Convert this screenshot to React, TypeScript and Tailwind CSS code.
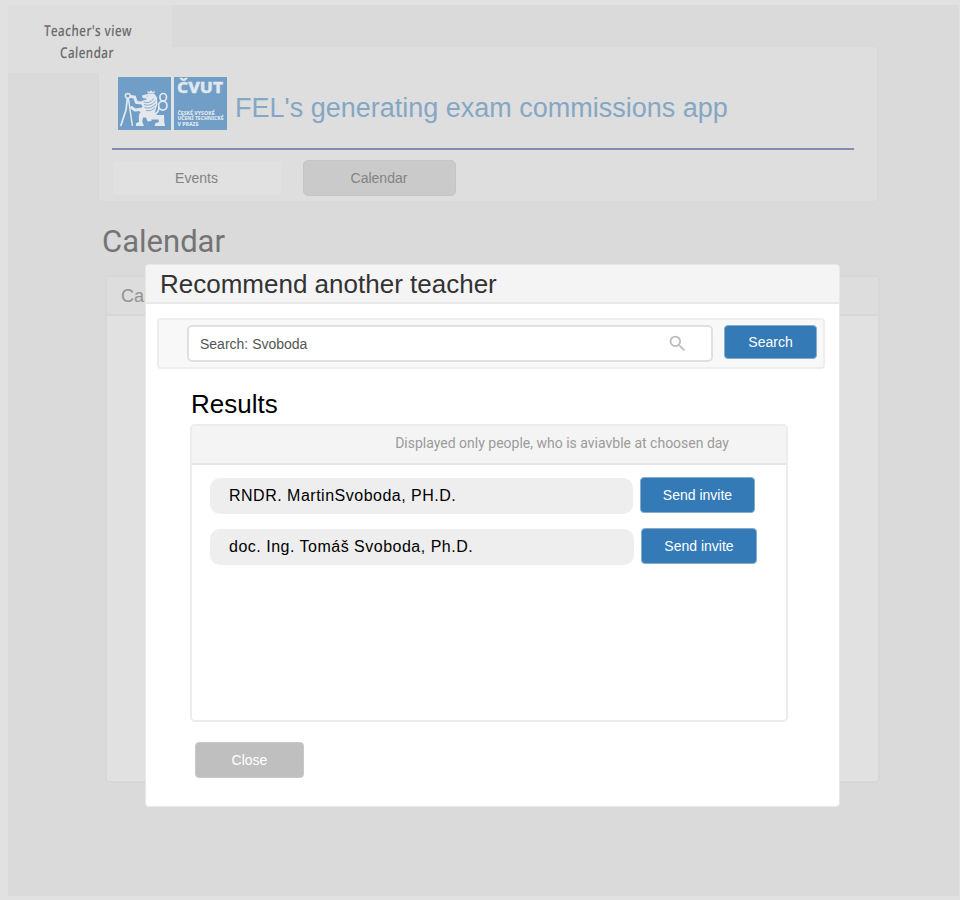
import type { ReactNode } from "react";

const arial = "font-['Liberation_Sans',Arial,sans-serif]";

function UniversityLogo() {
  return (
    <svg className="block h-[53px] w-[109px] shrink-0" viewBox="0 0 109 53">
      <rect width="53" height="53" fill="#719ec6" />
      <rect x="53" width="3" height="53" fill="#dde2e6" />
      <rect x="56" width="53" height="53" fill="#719ec6" />
      <g fill="none" stroke="#e2e8ed" strokeLinecap="round" strokeLinejoin="round">
        {/* compass */}
        <circle cx="9.8" cy="18.8" r="2.4" strokeWidth="1.5" />
        <path d="M9.3 22 L8 33 L3 48.3" strokeWidth="1.8" />
        <path d="M10.5 22 L12.5 36 L14.3 48.3" strokeWidth="1.5" />
        {/* forelegs */}
        <path d="M13 19.5 L16.5 20 L18.5 25.5 L25 26" strokeWidth="3" />
        <path d="M13.5 30.5 L17 33 L26 32" strokeWidth="3" />
        {/* tail */}
        <ellipse cx="45.2" cy="20.2" rx="3.3" ry="3.7" strokeWidth="1.7" />
        <ellipse cx="44.8" cy="28.6" rx="4.2" ry="4.5" strokeWidth="1.7" />
        <path d="M40.8 30 Q41 35 37 37" strokeWidth="1.6" />
      </g>
      <g fill="#e2e8ed">
        {/* crown */}
        <path d="M29.3 13.8 L31.2 15 L33 13.2 L34.7 15 L37 13.8 L36.2 16.5 L30 16.5 Z" />
        {/* head and body */}
        <path d="M24 18.5 L29.5 17 L36.5 17 L39 20.5 L39.4 27 L37.5 33 L37 37 L26 38 L21 34 L24.5 29.5 L22.5 25.5 L25 23.3 L29 22.5 L28 21.5 L24.5 21 Z" />
        {/* hind legs */}
        <path d="M22 35.5 L33 35 L33.5 44 L29.5 44.5 L28 40.5 L25 40.5 L24.3 45 L26 49 L17.8 49 L18.3 46 L21 45 L20.8 39 Z" />
        <path d="M28 36 L37 35.5 L39 38 H46 L46.3 45 L47 49 H36.5 L37.5 46 L41 45 L40.5 42.5 L33 42.5 Z" />
      </g>
      <path d="M25.5 24.8 Q31 27.5 36 21.5 M26 27.5 Q32 30 37.5 24 M26.5 30.3 Q32 33 38 27 M28 33.3 Q33 35 37 30.5" fill="none" stroke="#719ec6" strokeWidth=".8" />
      <circle cx="29.3" cy="19" r=".6" fill="#719ec6" />
      <g fill="#e2e8ed" fontFamily="'Noto Sans', sans-serif" fontWeight="800">
        <text x="59" y="15.8" fontSize="15" textLength="46" lengthAdjust="spacingAndGlyphs" stroke="#e2e8ed" strokeWidth=".3">ČVUT</text>
        <g fontSize="4.9">
          <text x="59.5" y="37.7" textLength="37" lengthAdjust="spacingAndGlyphs">ČESKÉ VYSOKÉ</text>
          <text x="59.5" y="43.4" textLength="46" lengthAdjust="spacingAndGlyphs">UČENÍ TECHNICKÉ</text>
          <text x="59.5" y="49.2" textLength="21" lengthAdjust="spacingAndGlyphs">V PRAZE</text>
        </g>
      </g>
    </svg>
  );
}

function SearchIcon() {
  return (
    <svg className="size-[21px]" viewBox="0 0 24 24" fill="#bcbcbc">
      <path d="M15.5 14h-.79l-.28-.27A6.47 6.47 0 0 0 16 9.5 6.5 6.5 0 1 0 9.5 16c1.61 0 3.09-.59 4.23-1.57l.27.28v.79l5 4.99L20.49 19l-4.99-5zm-6 0C7.01 14 5 11.99 5 9.5S7.01 5 9.5 5 14 7.01 14 9.5 11.99 14 9.5 14z" />
    </svg>
  );
}

function BlueButton({ size, children }: { size: string; children: ReactNode }) {
  return (
    <button className={`${size} flex shrink-0 items-center justify-center rounded-[4px] border border-[#83accf] bg-[#337ab7] text-[14px] text-white`}>
      {children}
    </button>
  );
}

function ResultRow({ name, pill, button }: { name: string; pill: string; button: string }) {
  return (
    <div className="flex h-9 items-start gap-[7px]">
      <div className={`${pill} mt-px flex h-9 shrink-0 items-center rounded-[10px] bg-[#eeeeee] pb-px pl-[19px] text-[16px] tracking-[0.5px] text-black`}>
        {name}
      </div>
      <BlueButton size={button}>Send invite</BlueButton>
    </div>
  );
}

export default function App() {
  return (
    <div className={`${arial} relative h-[900px] w-[960px] overflow-hidden bg-[#e1e1e1] pl-2 pt-[5px]`}>
      <div className="h-[891px] w-[951px] bg-[#dadada] pl-[89px] pt-10">
        <header className="h-[158px] w-[782px] rounded-[5px] border-2 border-[#d9d9d9] bg-[#dedede] pl-[13px] pt-[30px]">
          <div className="flex items-center gap-[8px] pl-[6px]">
            <UniversityLogo />
            <h1 className="whitespace-nowrap pt-[10px] text-[27px] leading-[43px] text-[#85a7c4]">
              FEL's generating exam commissions app
            </h1>
          </div>
          <div className="mt-[18px] h-[2px] w-[742px] bg-[#858cb2]" />
          <nav className="mt-[10px] flex items-center gap-[22px] pl-px text-[14px] text-[#838383]">
            <a className="flex h-[34px] w-[168px] items-center justify-center rounded-[3px] bg-[#e1e1e1] pr-px">Events</a>
            <a className="flex h-[36px] w-[153px] items-center justify-center rounded-[5px] border border-[#c5c5c5] bg-[#cacaca] pr-px">Calendar</a>
          </nav>
        </header>
        <h2 className="ml-[5px] mt-[19px] font-[Roboto,sans-serif] text-[31px] leading-[40px] text-[#747474]">Calendar</h2>
        <section className="ml-[8px] mt-[13px] h-[508px] w-[775px] overflow-hidden rounded-[5px] border-2 border-[#d7d7d7] bg-[#e1e1e1]">
          <div className="h-[39px] border-b-2 border-[#d7d7d7] bg-[#dddddd] pl-[14px] text-[18px] leading-[38px] text-[#929292]">Calendar</div>
        </section>
      </div>

      <div className="absolute left-2 top-[5px] h-[68px] w-[164px] bg-[#dedede]/90 pt-[14px] text-center font-['Open_Sans',sans-serif] text-[15px] font-semibold leading-[22px] text-[#6c6c6c]">
        <div className="-ml-[5px] origin-center -skew-x-3 scale-x-[0.78] tracking-[0.5px]">
          Teacher's view
          <br />
          Calendar
        </div>
      </div>

      <div role="dialog" className="absolute left-[145px] top-[264px] h-[543px] w-[695px] overflow-hidden rounded-[4px] border border-[#e8e8e8] bg-white">
        <div className="h-[39px] border-b-2 border-[#e8e8e8] bg-[#f4f4f4] pl-[14px] text-[26px] leading-[38px] text-[#333333]">
          Recommend another teacher
        </div>
        <div className="ml-[11px] mt-[14px] flex h-[51px] w-[668px] items-start rounded-[4px] border-2 border-[#eeeeee] bg-[#f8f8f8] pl-[28px] pt-[5px]">
          <div className="flex h-[37px] w-[526px] items-center justify-between rounded-[5px] border-2 border-[#e0e0e0] bg-white pl-[11px] pr-[23px] text-[14px] text-[#555555]">
            <span className="pt-[2px]">Search: Svoboda</span>
            <SearchIcon />
          </div>
          <div className="ml-[11px]">
            <BlueButton size="h-[34px] w-[93px]">Search</BlueButton>
          </div>
        </div>
        <h3 className="ml-[45px] mt-[19px] text-[26px] leading-[32px] text-black">Results</h3>
        <div className="ml-[44px] mt-[4px] h-[298px] w-[598px] overflow-hidden rounded-[5px] border-2 border-[#ececec] bg-white">
          <div className="h-[39px] border-b-2 border-[#e5e5e5] bg-[#f4f4f4] pr-[57px] text-right font-[Roboto,sans-serif] text-[14px] leading-[35px] text-[#9b9b9b]">
            Displayed only people, who is aviavble at choosen day
          </div>
          <div className="flex flex-col gap-[15px] pl-[18px] pt-[12px]">
            <ResultRow name="RNDR. MartinSvoboda, PH.D." pill="w-[423px]" button="h-9 w-[115px]" />
            <ResultRow name="doc. Ing. Tomáš Svoboda, Ph.D." pill="w-[424px]" button="h-9 w-[116px]" />
          </div>
        </div>
        <button className="ml-[49px] mt-[20px] flex h-9 w-[109px] items-center justify-center rounded-[4px] border border-[#c9c9c9] bg-[#bfbfbf] text-[14px] text-white">
          Close
        </button>
      </div>
    </div>
  );
}
